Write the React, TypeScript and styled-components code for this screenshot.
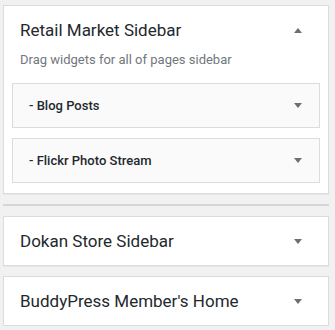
import React from "react";
import styled, { createGlobalStyle } from "styled-components";

const GlobalStyle = createGlobalStyle`
  html, body {
    margin: 0;
    padding: 0;
    background: #f1f1f1;
    font-family: Roboto, "Liberation Sans", sans-serif;
    color: #23282d;
  }
`;

const Root = styled.div`
  padding: 5px 6px 0 3px;
  display: flex;
  flex-direction: column;
  gap: 10px;
`;

const Panel = styled.div`
  background: #fff;
  border: 1px solid #dcdcdc;
  box-shadow: 0 1px 1px rgba(0, 0, 0, 0.04);
  display: flex;
  flex-direction: column;
`;

const PanelHeader = styled.div`
  height: 48px;
  display: flex;
  align-items: center;
  justify-content: space-between;
  padding: 0 26px 0 16px;
`;

const PanelTitle = styled.h2`
  margin: 0;
  font-size: 17px;
  font-weight: 400;
  color: #23282d;
  white-space: nowrap;
`;

const Description = styled.p`
  margin: -3px 0 0;
  padding: 0 16px;
  font-size: 13px;
  line-height: 18px;
  color: #72777c;
`;

const WidgetList = styled.div`
  display: flex;
  flex-direction: column;
  gap: 10px;
  padding: 14px 8px 10px;
`;

const Widget = styled.div`
  height: 43px;
  background: #fafafa;
  border: 1px solid #dcdcdc;
  display: flex;
  align-items: center;
  justify-content: space-between;
  padding: 0 17px 0 16px;
`;

const WidgetTitle = styled.span`
  font-size: 13px;
  font-weight: 500;
  color: #23282d;
`;

const Separator = styled.hr`
  margin: 0;
  border: 0;
  height: 2px;
  background: #d3d6da;
`;

const Arrow: React.FC<{ up?: boolean }> = ({ up }) => (
  <svg width="8" height="5" viewBox="0 0 8 5" style={{ display: "block" }}>
    <polygon points={up ? "0,5 8,5 4,0" : "0,0 8,0 4,5"} fill="#6b7075" />
  </svg>
);

const sidebars = ["Dokan Store Sidebar", "BuddyPress Member's Home"];

export default function App() {
  return (
    <>
      <GlobalStyle />
      <Root>
        <Panel>
          <PanelHeader>
            <PanelTitle>Retail Market Sidebar</PanelTitle>
            <Arrow up />
          </PanelHeader>
          <Description>Drag widgets for all of pages sidebar</Description>
          <WidgetList>
            {["- Blog Posts", "- Flickr Photo Stream"].map((w) => (
              <Widget key={w}>
                <WidgetTitle>{w}</WidgetTitle>
                <Arrow />
              </Widget>
            ))}
          </WidgetList>
        </Panel>
        <Separator />
        {sidebars.map((s) => (
          <Panel key={s}>
            <PanelHeader>
              <PanelTitle>{s}</PanelTitle>
              <Arrow />
            </PanelHeader>
          </Panel>
        ))}
      </Root>
    </>
  );
}
